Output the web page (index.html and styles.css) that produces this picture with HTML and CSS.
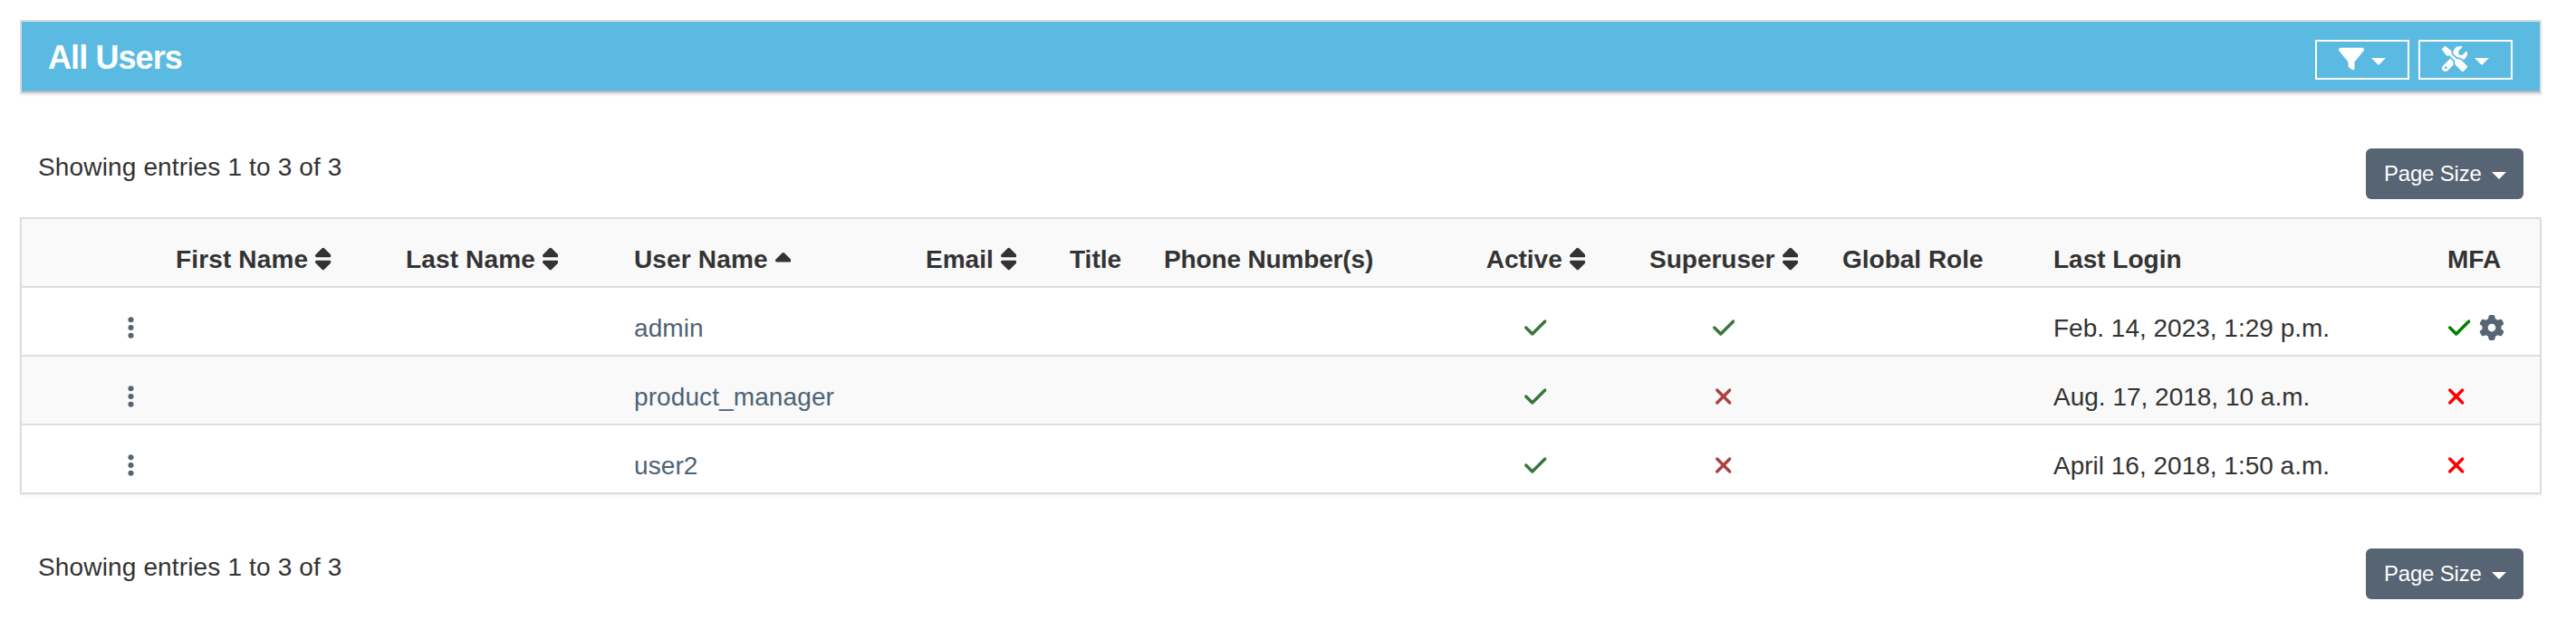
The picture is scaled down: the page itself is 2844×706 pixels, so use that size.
FILE: index.html
```html
<!DOCTYPE html>
<html lang="en">
<head>
<meta charset="utf-8">
<title>All Users</title>
<link rel="stylesheet" href="styles.css">
</head>
<body>
<svg class="sprite" aria-hidden="true">
  <symbol id="filter" viewBox="0 0 512 512"><path d="M3.9 54.9C10.5 40.9 24.5 32 40 32H472c15.5 0 29.5 8.9 36.1 22.9s4.6 30.5-5.2 42.5L320 320.9V448c0 12.1-6.8 23.2-17.7 28.6s-23.8 4.3-33.5-3l-64-48c-8.1-6-12.8-15.5-12.8-25.6V320.9L9 97.3C-.7 85.4-2.8 68.8 3.9 54.9z"/></symbol>
  <symbol id="tools" viewBox="0 0 512 512"><path d="M78.6 5C69.1-2.4 55.6-1.5 47 7L7 47c-8.5 8.5-9.4 22-2.1 31.6l80 104c4.5 5.9 11.6 9.4 19 9.4h54.1l109 109c-14.7 29-10 65.4 14.3 89.6l112 112c12.5 12.5 32.8 12.5 45.3 0l64-64c12.5-12.5 12.5-32.8 0-45.3l-112-112c-24.2-24.2-60.6-29-89.6-14.3l-109-109V104c0-7.5-3.5-14.5-9.4-19L78.6 5zM19.9 396.1C7.2 408.8 0 426.1 0 444.1C0 481.6 30.4 512 67.9 512c18 0 35.3-7.2 48-19.9L233.7 374.3c-7.8-20.9-9-43.6-3.6-65.1l-61.7-61.7L19.9 396.1zM512 144c0-10.5-1.1-20.7-3.2-30.5c-2.4-11.2-16.1-14.1-24.2-6l-63.9 63.9c-3 3-7.1 4.7-11.3 4.7H352c-8.8 0-16-7.2-16-16V102.6c0-4.2 1.7-8.3 4.7-11.3l63.9-63.9c8.1-8.1 5.2-21.8-6-24.2C388.7 1.1 378.5 0 368 0C288.5 0 224 64.5 224 144l0 .8 85.3 85.3c36-9.1 75.8 .5 104 28.7L429 274.5c49-23 83-72.8 83-130.5zM56 432a24 24 0 1 1 48 0 24 24 0 1 1 -48 0z"/></symbol>
  <symbol id="check" viewBox="0 0 448 512"><path d="M438.6 105.4c12.5 12.5 12.5 32.8 0 45.3l-256 256c-12.5 12.5-32.8 12.5-45.3 0l-128-128c-12.5-12.5-12.5-32.8 0-45.3s32.8-12.5 45.3 0L160 338.7 393.4 105.4c12.5-12.5 32.8-12.5 45.3 0z"/></symbol>
  <symbol id="xmark" viewBox="0 0 320 512"><path d="M310.6 150.6c12.5-12.5 12.5-32.8 0-45.3s-32.8-12.5-45.3 0L160 210.7 54.6 105.4c-12.5-12.5-32.8-12.5-45.3 0s-12.5 32.8 0 45.3L114.7 256 9.4 361.4c-12.5 12.5-12.5 32.8 0 45.3s32.8 12.5 45.3 0L160 301.3 265.4 406.6c12.5 12.5 32.8 12.5 45.3 0s12.5-32.8 0-45.3L205.3 256 310.6 150.6z"/></symbol>
  <symbol id="sort" viewBox="0 0 320 512"><path d="M137.4 41.4c12.5-12.5 32.8-12.5 45.3 0l128 128c9.2 9.2 11.9 22.9 6.9 34.9s-16.6 19.8-29.6 19.8H32c-12.9 0-24.6-7.8-29.6-19.8s-2.2-25.7 6.9-34.9l128-128zm0 429.3l-128-128c-9.2-9.2-11.9-22.9-6.9-34.9s16.6-19.8 29.6-19.8H288c12.9 0 24.6 7.8 29.6 19.8s2.2 25.7-6.9 34.9l-128 128c-12.5 12.5-32.8 12.5-45.3 0z"/></symbol>
  <symbol id="caret-up" viewBox="0 0 320 512"><path d="M182.6 137.4c-12.5-12.5-32.8-12.5-45.3 0l-128 128c-9.2 9.2-11.9 22.9-6.9 34.9s16.6 19.8 29.6 19.8H288c12.9 0 24.6-7.8 29.6-19.8s2.2-25.7-6.9-34.9l-128-128z"/></symbol>
  <symbol id="dots" viewBox="0 0 128 512"><circle cx="64" cy="96" r="56"/><circle cx="64" cy="256" r="56"/><circle cx="64" cy="416" r="56"/></symbol>
  <symbol id="gear" viewBox="0 0 512 512"><path d="M495.9 166.6c3.2 8.7 .5 18.4-6.4 24.6l-43.3 39.4c1.1 8.3 1.7 16.8 1.7 25.4s-.6 17.1-1.7 25.4l43.3 39.4c6.9 6.2 9.6 15.9 6.4 24.6c-4.4 11.9-9.7 23.3-15.8 34.3l-4.7 8.1c-6.6 11-14 21.4-22.1 31.2c-5.9 7.2-15.7 9.6-24.5 6.8l-55.7-17.7c-13.4 10.3-28.2 18.9-44 25.4l-12.5 57.1c-2 9.1-9 16.3-18.2 17.8c-13.8 2.3-28 3.5-42.5 3.5s-28.7-1.2-42.5-3.5c-9.2-1.5-16.2-8.7-18.2-17.8l-12.5-57.1c-15.8-6.5-30.6-15.1-44-25.4L83.1 425.9c-8.8 2.8-18.6 .3-24.5-6.8c-8.1-9.8-15.5-20.2-22.1-31.2l-4.7-8.1c-6.1-11-11.4-22.4-15.8-34.3c-3.2-8.7-.5-18.4 6.4-24.6l43.3-39.4C64.6 273.1 64 264.6 64 256s.6-17.1 1.7-25.4L22.4 191.2c-6.9-6.2-9.6-15.9-6.4-24.6c4.4-11.9 9.7-23.3 15.8-34.3l4.7-8.1c6.6-11 14-21.4 22.1-31.2c5.9-7.2 15.7-9.6 24.5-6.8l55.7 17.7c13.4-10.3 28.2-18.9 44-25.4l12.5-57.1c2-9.1 9-16.3 18.2-17.8C227.3 1.2 241.5 0 256 0s28.7 1.2 42.5 3.5c9.2 1.5 16.2 8.7 18.2 17.8l12.5 57.1c15.8 6.5 30.6 15.1 44 25.4l55.7-17.7c8.8-2.8 18.6-.3 24.5 6.8c8.1 9.8 15.5 20.2 22.1 31.2l4.7 8.1c6.1 11 11.4 22.4 15.8 34.3zM256 336a80 80 0 1 0 0-160 80 80 0 1 0 0 160z"/></symbol>
</svg>

<header class="panel-heading">
  <h1 class="title">All Users</h1>
  <div class="tools">
    <button class="tool"><svg class="icon"><use href="#filter"/></svg><span class="caret"></span></button>
    <button class="tool"><svg class="icon"><use href="#tools"/></svg><span class="caret"></span></button>
  </div>
</header>

<div class="pager">
  <span class="summary">Showing entries 1 to 3 of 3</span>
  <button class="page-size">Page Size<span class="caret"></span></button>
</div>

<table class="users">
  <colgroup>
    <col class="c-menu"><col class="c-first"><col class="c-last"><col class="c-user"><col class="c-email"><col class="c-title">
    <col class="c-phone"><col class="c-active"><col class="c-super"><col class="c-role"><col class="c-login"><col class="c-mfa">
  </colgroup>
  <thead>
    <tr>
      <th></th>
      <th><div class="cell name">First Name<svg class="icon slim"><use href="#sort"/></svg></div></th>
      <th><div class="cell name">Last Name<svg class="icon slim"><use href="#sort"/></svg></div></th>
      <th><div class="cell name">User Name<svg class="icon slim"><use href="#caret-up"/></svg></div></th>
      <th><div class="cell">Email<svg class="icon slim"><use href="#sort"/></svg></div></th>
      <th><div class="cell">Title</div></th>
      <th><div class="cell phone">Phone Number(s)</div></th>
      <th><div class="cell center">Active<svg class="icon slim"><use href="#sort"/></svg></div></th>
      <th><div class="cell center">Superuser<svg class="icon slim"><use href="#sort"/></svg></div></th>
      <th><div class="cell">Global Role</div></th>
      <th><div class="cell">Last Login</div></th>
      <th><div class="cell">MFA</div></th>
    </tr>
  </thead>
  <tbody>
    <tr>
      <td><div class="cell menu"><svg class="icon dots"><use href="#dots"/></svg></div></td>
      <td></td><td></td>
      <td><div class="cell"><a class="link">admin</a></div></td>
      <td></td><td></td><td></td>
      <td><div class="cell center yes"><svg class="icon check"><use href="#check"/></svg></div></td>
      <td><div class="cell center yes"><svg class="icon check"><use href="#check"/></svg></div></td>
      <td></td>
      <td><div class="cell">Feb. 14, 2023, 1:29 p.m.</div></td>
      <td><div class="cell mfa on"><svg class="icon check"><use href="#check"/></svg><svg class="icon gear"><use href="#gear"/></svg></div></td>
    </tr>
    <tr>
      <td><div class="cell menu"><svg class="icon dots"><use href="#dots"/></svg></div></td>
      <td></td><td></td>
      <td><div class="cell"><a class="link">product_manager</a></div></td>
      <td></td><td></td><td></td>
      <td><div class="cell center yes"><svg class="icon check"><use href="#check"/></svg></div></td>
      <td><div class="cell center no"><svg class="icon slim"><use href="#xmark"/></svg></div></td>
      <td></td>
      <td><div class="cell">Aug. 17, 2018, 10 a.m.</div></td>
      <td><div class="cell mfa off"><svg class="icon slim"><use href="#xmark"/></svg></div></td>
    </tr>
    <tr>
      <td><div class="cell menu"><svg class="icon dots"><use href="#dots"/></svg></div></td>
      <td></td><td></td>
      <td><div class="cell"><a class="link">user2</a></div></td>
      <td></td><td></td><td></td>
      <td><div class="cell center yes"><svg class="icon check"><use href="#check"/></svg></div></td>
      <td><div class="cell center no"><svg class="icon slim"><use href="#xmark"/></svg></div></td>
      <td></td>
      <td><div class="cell">April 16, 2018, 1:50 a.m.</div></td>
      <td><div class="cell mfa off"><svg class="icon slim"><use href="#xmark"/></svg></div></td>
    </tr>
  </tbody>
</table>

<div class="pager bottom">
  <span class="summary">Showing entries 1 to 3 of 3</span>
  <button class="page-size">Page Size<span class="caret"></span></button>
</div>
</body>
</html>
```
FILE: styles.css
```css
* { box-sizing: border-box; }

body {
  margin: 0;
  padding: 22px 38px 0 22px;
  background: #fff;
  color: #333;
  font-family: "Liberation Sans", Arial, sans-serif;
  font-size: 28px;
  line-height: 40px;
}

button { font-family: inherit; color: #fff; margin: 0; }

.sprite { display: none; }
.icon { flex: none; width: 28px; height: 28px; fill: currentColor; }
.icon.slim { width: 17.5px; }
.icon.check { width: 24.5px; }
.icon.dots { width: 7px; }

.caret {
  border-top: 8px solid currentColor;
  border-left: 8px solid transparent;
  border-right: 8px solid transparent;
}

/* Panel heading */
.panel-heading {
  display: flex;
  justify-content: space-between;
  align-items: flex-start;
  height: 82px;
  padding: 20px 30px 0 29px;
  background: #5abae2;
  border: 2px solid #ddd;
  box-shadow: inset 0 -2px 0 #a5b8cf, 0 2px 2px rgba(0, 0, 0, .05);
}
.title { margin: 0; color: #fff; font-size: 36px; font-weight: 700; letter-spacing: -.9px; }
.tools { display: flex; gap: 10px; }
.tool {
  display: flex;
  align-items: center;
  gap: 8px;
  width: 104px;
  height: 44px;
  padding: 0 0 0 24px;
  background: transparent;
  border: 2px solid #fff;
}
.tool .icon { margin-top: -2px; }
.tool .caret { margin-top: 4px; }

/* Entry count and page size */
.pager {
  display: flex;
  justify-content: space-between;
  align-items: flex-start;
  height: 136px;
  padding: 60px 20px 0;
}
.pager.bottom { height: 160px; }
.summary { padding-top: 1px; letter-spacing: .15px; }
.page-size {
  display: flex;
  align-items: center;
  gap: 11px;
  width: 174px;
  height: 56px;
  padding: 0 0 0 20px;
  background: #566473;
  border: 0;
  border-radius: 6px;
  font-size: 24px;
  letter-spacing: -.2px;
}
.page-size .caret { margin-top: 4px; }

/* Users table */
.users {
  width: 2784px;
  table-layout: fixed;
  border-spacing: 0;
  border: 2px solid #ddd;
  border-top: 0;
  box-shadow: 0 2px 2px rgba(0, 0, 0, .05);
}
.users th, .users td { height: 76px; padding: 0 0 0 9px; border-top: 2px solid #ddd; text-align: left; white-space: nowrap; }
.users th, .users tbody tr:nth-child(even) { background: #f9f9f9; }

.c-menu { width: 161px; }
.c-first { width: 254px; }
.c-last { width: 252px; }
.c-user { width: 322px; }
.c-email { width: 159px; }
.c-title { width: 104px; }
.c-phone { width: 334px; }
.c-active { width: 171px; }
.c-super { width: 244px; }
.c-role { width: 233px; }
.c-login { width: 435px; }
.c-mfa { width: 111px; }

.cell { display: flex; align-items: center; gap: 8px; padding-top: 15px; }
.cell.center { justify-content: center; margin-left: -9px; }
.cell.menu { padding-left: 108px; color: #566473; }
.cell.name { letter-spacing: .15px; }
.cell.phone { letter-spacing: -.15px; }
.cell.mfa { padding-left: 1px; gap: 9px; }
.users .icon { margin-bottom: 2px; }
.link { color: #4f6275; letter-spacing: .1px; }
.yes { color: #3c763d; }
.no { color: #a94442; }
.on { color: green; }
.off { color: red; }
.gear { color: #566473; }
```
